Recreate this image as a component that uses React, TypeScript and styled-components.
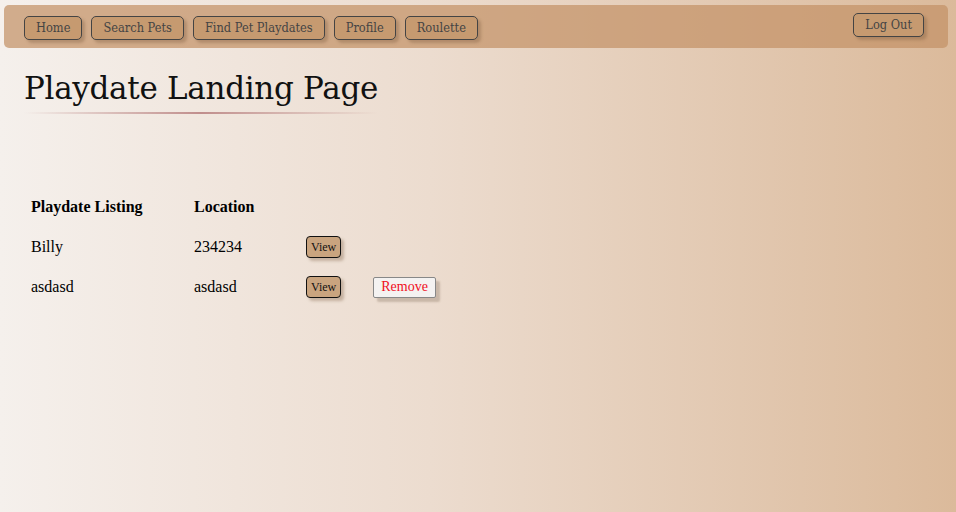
import React from "react";
import styled, { createGlobalStyle } from "styled-components";

const GlobalStyle = createGlobalStyle`
  html, body {
    margin: 0;
    padding: 0;
  }
  body {
    min-height: 512px;
    background: linear-gradient(90deg, #f5f0ec 0%, #ecdccf 45%, #dbba9b 100%);
    font-family: "Liberation Serif", serif;
    color: #000;
  }
`;

const Page = styled.div`
  min-height: 512px;
  padding: 5px 8px 0 4px;
  box-sizing: border-box;
`;

const NavBar = styled.nav`
  display: flex;
  align-items: center;
  justify-content: space-between;
  height: 43px;
  padding: 0 24px 0 20px;
  border-radius: 5px;
  background: rgba(196, 145, 102, 0.72);
  box-sizing: border-box;
`;

const NavGroup = styled.div`
  display: flex;
  gap: 9px;
  padding-top: 2px;
`;

const NavButton = styled.button<{ $raised?: boolean }>`
  height: 24px;
  padding: 0 11px;
  margin-top: ${(p) => (p.$raised ? "-4px" : "0")};
  font-family: "DejaVu Serif Condensed", "DejaVu Serif", serif;
  font-stretch: condensed;
  font-size: 12.7px;
  color: #444;
  background: #c69a70;
  border: 1px solid #444;
  border-radius: 5px;
  box-shadow: 3px 3px 3px rgba(120, 90, 60, 0.35);
  cursor: pointer;
`;

const Title = styled.h1`
  display: inline-block;
  margin: 22px 0 0 20px;
  padding-bottom: 8px;
  font-family: "DejaVu Serif", serif;
  font-weight: 400;
  font-size: 31px;
  letter-spacing: -0.3px;
  color: #111;
  position: relative;

  &::after {
    content: "";
    position: absolute;
    left: 0;
    right: 0;
    bottom: 0;
    height: 2px;
    background: linear-gradient(
      90deg,
      rgba(180, 120, 120, 0) 0%,
      rgba(180, 120, 120, 0.8) 50%,
      rgba(180, 120, 120, 0) 100%
    );
  }
`;

const Table = styled.table`
  margin: 73px 0 0 18px;
  border-collapse: separate;
  border-spacing: 3px 0;
  font-size: 16px;
`;

const HeadCell = styled.th<{ $w?: number }>`
  text-align: left;
  padding: 0 6px;
  height: 40px;
  width: ${(p) => (p.$w ? `${p.$w}px` : "auto")};
`;

const Cell = styled.td`
  padding: 0 6px;
  height: 40px;
`;

const ViewButton = styled.button`
  height: 22px;
  padding: 0 4px;
  font-family: "Liberation Serif", serif;
  font-size: 12px;
  color: #111;
  background: #c9a47f;
  border: 1px solid #111;
  border-radius: 4px;
  box-shadow: 3px 3px 3px rgba(120, 90, 60, 0.35);
  cursor: pointer;
`;

const RemoveButton = styled.button`
  height: 21px;
  padding: 0 7px;
  margin-left: 17px;
  font-family: "Liberation Serif", serif;
  font-size: 14px;
  color: #f0101e;
  background: #f4f2f1;
  border: 1px solid #888;
  border-radius: 2px;
  box-shadow: 4px 4px 2px rgba(120, 100, 80, 0.3);
  cursor: pointer;
`;

const playdates = [
  { name: "Billy", location: "234234", owned: false },
  { name: "asdasd", location: "asdasd", owned: true },
];

export default function App() {
  return (
    <>
      <GlobalStyle />
      <Page>
        <NavBar>
          <NavGroup>
            <NavButton>Home</NavButton>
            <NavButton>Search Pets</NavButton>
            <NavButton>Find Pet Playdates</NavButton>
            <NavButton>Profile</NavButton>
            <NavButton>Roulette</NavButton>
          </NavGroup>
          <NavButton $raised>Log Out</NavButton>
        </NavBar>
        <Title>Playdate Landing Page</Title>
        <Table>
          <thead>
            <tr>
              <HeadCell $w={148}>Playdate Listing</HeadCell>
              <HeadCell $w={97}>Location</HeadCell>
              <HeadCell />
              <HeadCell />
            </tr>
          </thead>
          <tbody>
            {playdates.map((p) => (
              <tr key={p.name}>
                <Cell>{p.name}</Cell>
                <Cell>{p.location}</Cell>
                <Cell>
                  <ViewButton>View</ViewButton>
                </Cell>
                <Cell>{p.owned && <RemoveButton>Remove</RemoveButton>}</Cell>
              </tr>
            ))}
          </tbody>
        </Table>
      </Page>
    </>
  );
}
